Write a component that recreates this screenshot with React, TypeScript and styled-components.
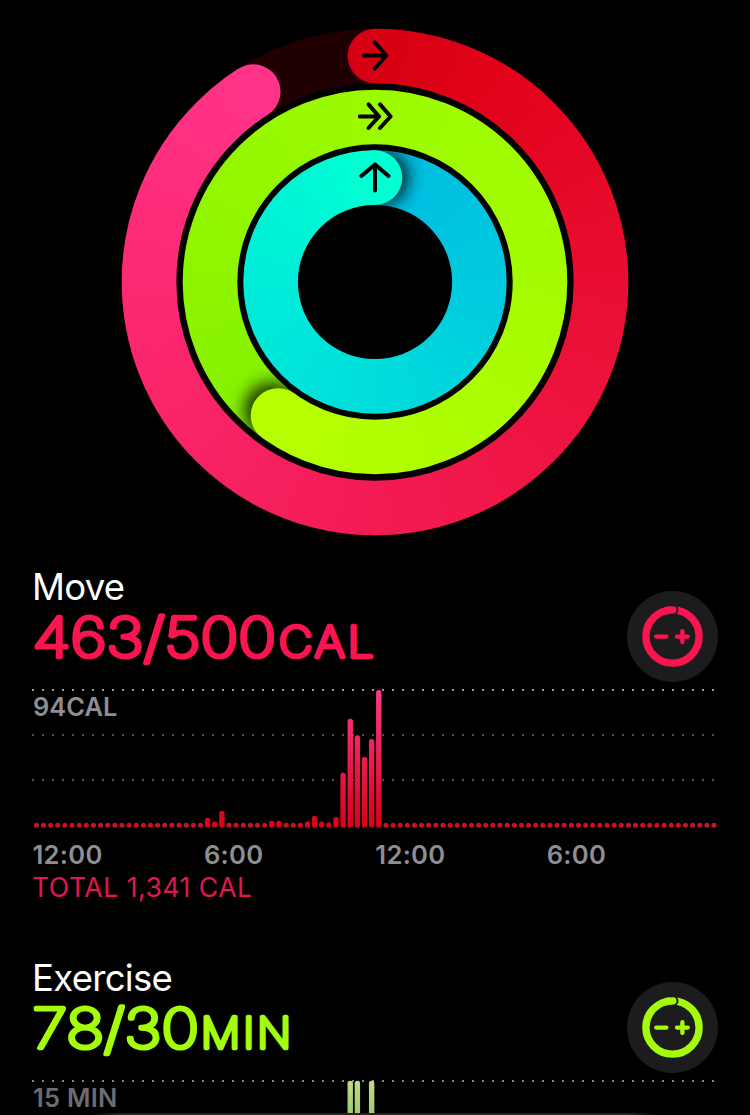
import React from "react";
import styled, { createGlobalStyle } from "styled-components";

const GlobalStyle = createGlobalStyle`
  * { box-sizing: border-box; }
  html, body { margin: 0; background: #000; overflow: hidden; }
  body { font-family: Inter, "Liberation Sans", sans-serif; color: #fff; }
`;

const Screen = styled.main`
  position: relative;
  display: flex;
  flex-direction: column;
  width: 750px;
  height: 1115px;
  overflow: hidden;
  background: #000;
`;

const RingsArea = styled.header`
  flex: none;
  height: 566px;
  svg { display: block; }
`;

const Section = styled.section`
  flex: none;
  display: flex;
  flex-direction: column;
  height: 391px;
  padding: 0 32px;
`;

const SectionHeader = styled.div`
  display: flex;
  justify-content: space-between;
  height: 123px;
`;

const Summary = styled.div`
  display: flex;
  flex-direction: column;
`;

const Title = styled.h2`
  margin: 0;
  height: 42px;
  line-height: 42px;
  font-size: 36.5px;
  font-weight: 400;
  letter-spacing: -0.7px;
`;

const Reading = styled.svg<{ $color: string }>`
  display: block;
  overflow: visible;
  fill: ${(p) => p.$color};
  stroke: ${(p) => p.$color};
  stroke-width: 4.7px;
  stroke-linejoin: round;
  stroke-linecap: round;
  font-family: Inter, sans-serif;
  font-weight: 100;
`;

const Unit = styled.text`
  font-size: 41.5px;
  letter-spacing: 3px;
`;

const GoalButton = styled.button`
  width: 91px;
  height: 91px;
  margin: 25px 0 0;
  padding: 0;
  border: 0;
  border-radius: 50%;
  background: #1c1c1e;
  svg { display: block; }
`;

const ChartBox = styled.div`
  display: grid;
  height: 141px;
  > * { grid-area: 1 / 1; }
  svg { display: block; overflow: visible; }
`;

const ChartLabel = styled.span<{ $color: string; $spacing: number }>`
  padding: 4px 0 0 1px;
  line-height: 28px;
  font-size: 25.4px;
  font-weight: 600;
  letter-spacing: ${(p) => p.$spacing}px;
  color: ${(p) => p.$color};
`;

const Hours = styled.div`
  display: grid;
  grid-template-columns: repeat(4, 171.4px);
  height: 32px;
  margin-top: 9px;
  padding-left: 0.5px;
  line-height: 32px;
  font-size: 25.6px;
  font-weight: 600;
  letter-spacing: 0.3px;
  color: #8e8e93;
`;

const Total = styled.div<{ $color: string }>`
  height: 32px;
  line-height: 32px;
  font-size: 26.6px;
  font-weight: 400;
  letter-spacing: 0.5px;
  white-space: nowrap;
  color: ${(p) => p.$color};
`;

const BottomEdge = styled.div`
  position: absolute;
  left: 92px;
  right: 92px;
  bottom: 0;
  height: 2px;
  background: linear-gradient(90deg, transparent, #242426 30px, #242426 calc(100% - 30px), transparent);
`;

type RGB = [number, number, number];
type Stop = [number, RGB];

const CX = 375;
const CY = 282;
const BAND = 54.6;

function pointAt(r: number, deg: number): [number, number] {
  const a = (deg * Math.PI) / 180;
  return [CX + r * Math.sin(a), CY - r * Math.cos(a)];
}

function colorAt(stops: Stop[], deg: number) {
  let i = 0;
  while (i < stops.length - 2 && deg > stops[i + 1][0]) i++;
  const [a, ca] = stops[i];
  const [b, cb] = stops[i + 1];
  const t = Math.min(1, Math.max(0, (deg - a) / (b - a)));
  return `rgb(${ca.map((v, k) => Math.round(v + (cb[k] - v) * t)).join(",")})`;
}

function Sweep({ r, from, to, stops }: { r: number; from: number; to: number; stops: Stop[] }) {
  const step = 1.5;
  const parts: React.ReactNode[] = [];
  for (let d = from; d < to; d += step) {
    const end = Math.min(to, d + step + 0.7);
    const [x1, y1] = pointAt(r, d);
    const [x2, y2] = pointAt(r, end);
    parts.push(
      <path key={d} d={`M${x1} ${y1}A${r} ${r} 0 0 1 ${x2} ${y2}`} stroke={colorAt(stops, d)} />
    );
  }
  return <g fill="none" strokeWidth={BAND + 4}>{parts}</g>;
}

function Cap({ r, deg, fill }: { r: number; deg: number; fill: string }) {
  const [x, y] = pointAt(r, deg);
  return <circle cx={x} cy={y} r={BAND / 2} fill={fill} />;
}

const moveStops: Stop[] = [
  [0, [214, 0, 18]], [30, [226, 2, 26]], [90, [233, 14, 50]],
  [180, [243, 27, 84]], [270, [252, 42, 116]], [328, [255, 51, 136]],
];
const exerciseStops: Stop[] = [
  [216, [132, 240, 0]], [270, [142, 245, 0]], [360, [156, 250, 0]],
  [450, [165, 252, 0]], [540, [178, 255, 0]], [576, [183, 255, 0]],
];
const standStops: Stop[] = [
  [0, [0, 186, 225]], [90, [0, 202, 223]], [180, [0, 221, 220]],
  [270, [0, 237, 217]], [360, [0, 255, 210]],
];

function BandMask({ id, r }: { id: string; r: number }) {
  return (
    <mask id={id} maskUnits="userSpaceOnUse" x="0" y="0" width="750" height="566">
      <circle cx={CX} cy={CY} r={r} fill="none" stroke="#fff" strokeWidth={BAND} />
    </mask>
  );
}

function Rings() {
  const [ex, ey] = pointAt(165, 216);
  return (
    <svg width="750" height="566" viewBox="0 0 750 566">
      <defs>
        <filter id="soft" x="-60%" y="-60%" width="220%" height="220%">
          <feGaussianBlur stdDeviation="8" />
        </filter>
        <BandMask id="moveBand" r={226} />
        <BandMask id="exerciseBand" r={165} />
        <BandMask id="standBand" r={104.4} />
      </defs>

      <circle cx={CX} cy={CY} r="226" fill="none" stroke="#200003" strokeWidth={BAND} />
      <g mask="url(#moveBand)">
        <Sweep r={226} from={0} to={327.4} stops={moveStops} />
      </g>
      <Cap r={226} deg={0} fill="rgb(214,0,18)" />
      <Cap r={226} deg={327.4} fill="rgb(255,51,136)" />

      <g mask="url(#exerciseBand)">
        <Sweep r={165} from={216} to={576} stops={exerciseStops} />
        <circle cx={ex - 6} cy={ey - 5} r="28" fill="#000" opacity="0.78" filter="url(#soft)" />
        <Sweep r={165} from={500} to={576} stops={exerciseStops} />
      </g>
      <Cap r={165} deg={216} fill="rgb(183,255,0)" />

      <g mask="url(#standBand)">
        <Sweep r={104.4} from={0} to={360} stops={standStops} />
        <circle cx={CX + 6} cy={CY - 104.4} r="28" fill="#000" opacity="0.75" filter="url(#soft)" />
        <Sweep r={104.4} from={290} to={360} stops={standStops} />
      </g>
      <Cap r={104.4} deg={0} fill="rgb(0,255,210)" />

      <g fill="none" stroke="#000" strokeWidth="4" strokeLinecap="round" strokeLinejoin="round">
        <path d="M364 55.5H386M374.5 42.4L386.4 55.5L374.5 68.6" />
        <path d="M359.8 116.5H379M368.5 104.4L379 116.5L368.5 128M380 104.4L390.6 116.5L380 128" />
        <path d="M375 190.6V164.5M361.4 176L375 164.4L388.6 176" />
      </g>
    </svg>
  );
}

function GoalIcon({ color }: { color: string }) {
  return (
    <svg width="91" height="91" viewBox="0 0 91 91" fill="none" stroke={color}>
      <circle cx="45.5" cy="45.5" r="26.6" strokeWidth="7.4" />
      <circle cx="46.6" cy="18.9" r="4.9" fill="#1c1c1e" stroke="none" />
      <path d="M40 19.5L45.8 18.9" strokeWidth="7.4" strokeLinecap="round" />
      <path d="M29.2 45.6H39.4M50 45.6H60.8M55.4 40.2V51" strokeWidth="4.3" strokeLinecap="round" />
    </svg>
  );
}

const MOVE_BARS: Record<number, number> = {
  24: 10, 25: 6.3, 26: 17, 33: 7, 34: 7, 38: 6.3, 39: 12, 40: 6.3, 41: 5.5, 42: 10.8,
  43: 55, 44: 109, 45: 92.4, 46: 70.7, 47: 88.7, 48: 137.7,
};
const EXERCISE_BARS: Record<number, number> = { 44: 138, 45: 138, 47: 138 };

function Chart({ id, bars, top, bottom, dot, lineColor }: {
  id: string; bars: Record<number, number>; top: string; bottom: string; dot: string; lineColor: string;
}) {
  return (
    <svg width="686" height="141" viewBox="0 0 686 141">
      <defs>
        <linearGradient id={id} gradientUnits="userSpaceOnUse" x1="0" y1="1" x2="0" y2="139">
          <stop offset="0" stopColor={top} />
          <stop offset="1" stopColor={bottom} />
        </linearGradient>
      </defs>
      {[1, 46, 91].map((y) => (
        <path key={y} d={`M0 ${y}H683`} stroke={y === 1 ? lineColor : "#515153"} strokeWidth="2" strokeDasharray="2 8" />
      ))}
      {Array.from({ length: 96 }, (_, i) => {
        const x = 4.4 + i * 7.133;
        const h = bars[i];
        return h ? (
          <rect key={i} x={x - 2.7} y={138.7 - h} width="5.4" height={h} rx="2.6" fill={`url(#${id})`} />
        ) : (
          <circle key={i} cx={x} cy="136.3" r="2.5" fill={dot} />
        );
      })}
    </svg>
  );
}

export default function App() {
  return (
    <>
      <GlobalStyle />
      <Screen>
        <RingsArea><Rings /></RingsArea>

        <Section>
          <SectionHeader>
            <Summary>
              <Title>Move</Title>
              <Reading $color="#fa1450" width="345" height="60">
                <text x="0.5" y="48.6" fontSize="54.5" textLength="243.5" lengthAdjust="spacingAndGlyphs">463/500</text>
                <Unit x="247" y="48.6" textLength="98" lengthAdjust="spacingAndGlyphs">CAL</Unit>
              </Reading>
            </Summary>
            <GoalButton aria-label="Change move goal"><GoalIcon color="#fa1450" /></GoalButton>
          </SectionHeader>
          <ChartBox>
            <Chart id="moveFill" bars={MOVE_BARS} top="#fb3a8c" bottom="#d90014" dot="#cf0f25" lineColor="#98989b" />
            <ChartLabel $color="#8e8e93" $spacing={0.1}>94CAL</ChartLabel>
          </ChartBox>
          <Hours>
            <span>12:00</span><span>6:00</span><span>12:00</span><span>6:00</span>
          </Hours>
          <Total $color="#e0184f">TOTAL 1,341 CAL</Total>
        </Section>

        <Section>
          <SectionHeader>
            <Summary>
              <Title>Exercise</Title>
              <Reading $color="#a4fc0a" width="345" height="60">
                <text x="0.5" y="48.6" fontSize="54.5" textLength="166.5" lengthAdjust="spacingAndGlyphs">78/30</text>
                <Unit x="169" y="48.6" textLength="93" lengthAdjust="spacingAndGlyphs">MIN</Unit>
              </Reading>
            </Summary>
            <GoalButton aria-label="Change exercise goal"><GoalIcon color="#a4fc0a" /></GoalButton>
          </SectionHeader>
          <ChartBox>
            <Chart id="exerciseFill" bars={EXERCISE_BARS} top="#bddb8c" bottom="#4f8f1f" dot="#7fc010" lineColor="#8a8a8d" />
            <ChartLabel $color="#6c6c70" $spacing={0.3}>15 MIN</ChartLabel>
          </ChartBox>
        </Section>
        <BottomEdge />
      </Screen>
    </>
  );
}
